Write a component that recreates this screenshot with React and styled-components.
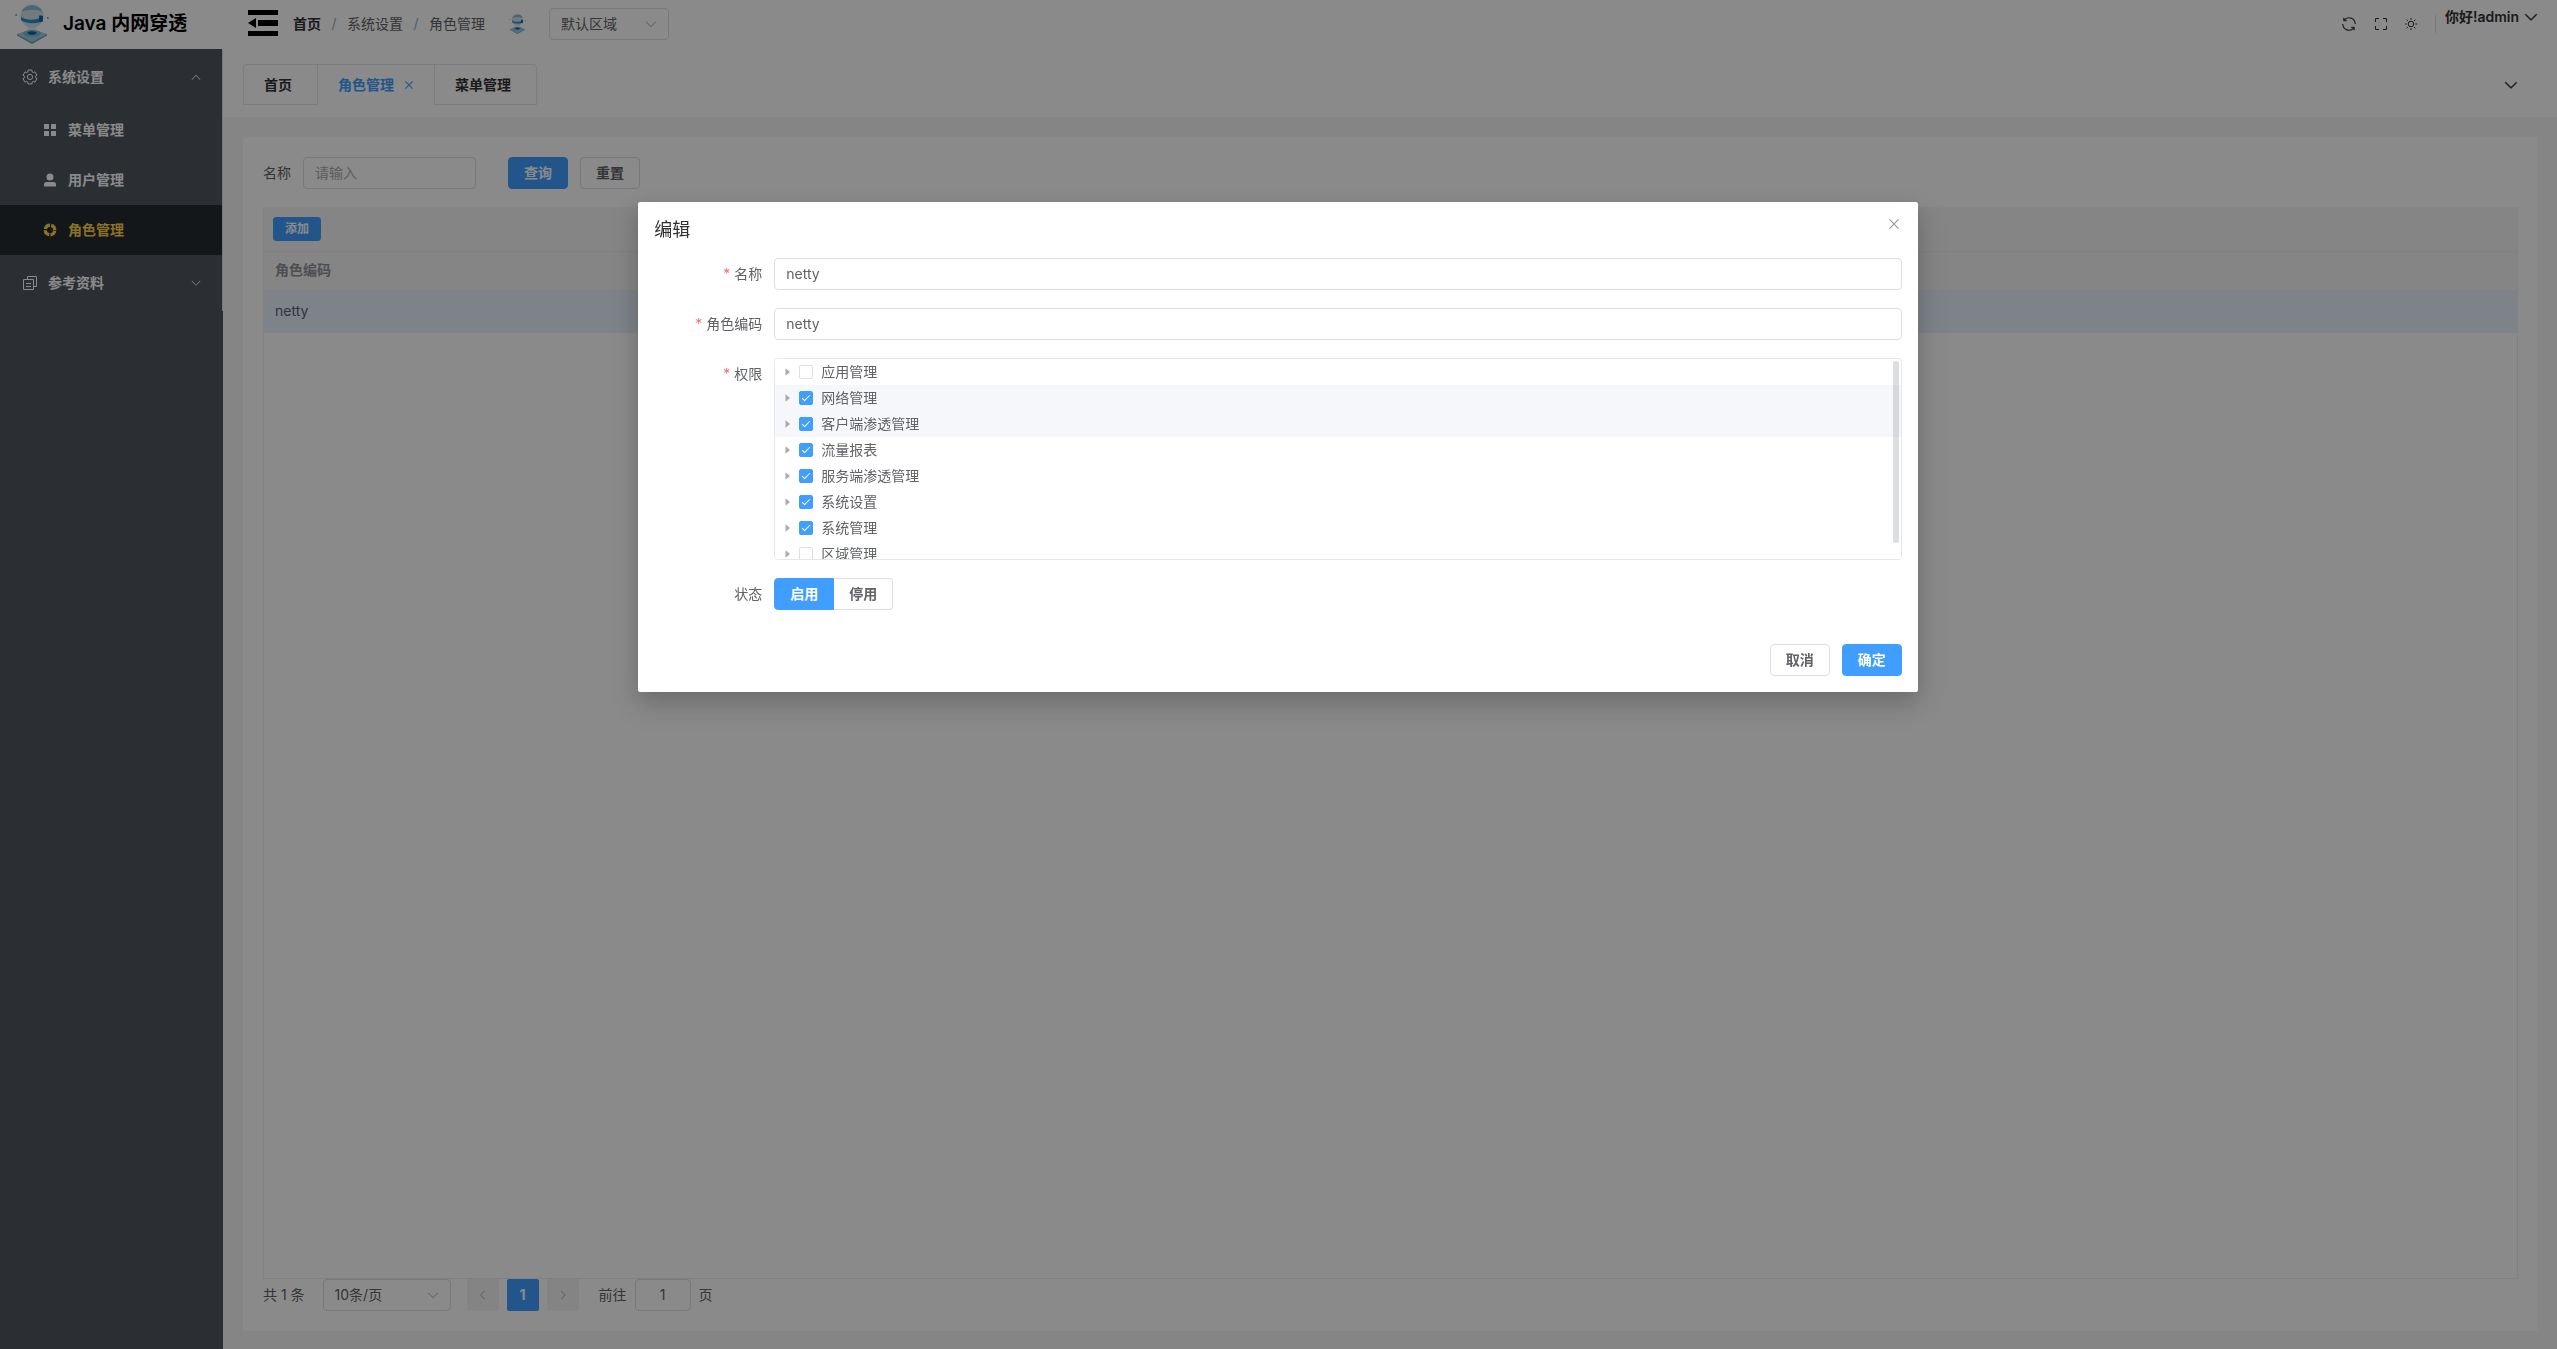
import React, { useState } from "react";
import styled, { createGlobalStyle, css } from "styled-components";

const Global = createGlobalStyle`
  *, *::before, *::after { box-sizing: border-box; }
  body {
    margin: 0;
    font-family: Inter, "Noto Sans CJK SC", sans-serif;
    font-size: 14px;
    line-height: 20px;
    color: #606266;
    background: #f5f5f5;
  }
  button, input, select {
    font: inherit;
    color: inherit;
    margin: 0;
  }
  button { cursor: pointer; }
`;

const BLUE = "#409eff";
const LINE = "#dcdfe6";

/* ---------- icons ---------- */

const Svg = styled.svg`
  display: block;
  flex: none;
  width: ${(p) => p.$size || 14}px;
  height: ${(p) => p.$size || 14}px;
`;

const ep = {
  down: "M831.872 340.864 512 652.672 192.128 340.864a30.592 30.592 0 0 0-42.752 0 29.12 29.12 0 0 0 0 41.6L489.664 714.24a32 32 0 0 0 44.672 0l340.288-331.712a29.12 29.12 0 0 0 0-41.728 30.592 30.592 0 0 0-42.752 0z",
  up: "m488.832 344.32-339.84 356.672a32 32 0 0 0 0 44.16l.384.384a29.44 29.44 0 0 0 42.688 0l320-335.872 319.872 335.872a29.44 29.44 0 0 0 42.688 0l.384-.384a32 32 0 0 0 0-44.16L535.168 344.32a32 32 0 0 0-46.336 0z",
  left: "M609.408 149.376 277.76 489.6a32 32 0 0 0 0 44.672l331.648 340.352a29.12 29.12 0 0 0 41.728 0 30.592 30.592 0 0 0 0-42.752L339.264 511.936l311.872-319.872a30.592 30.592 0 0 0 0-42.688 29.12 29.12 0 0 0-41.728 0z",
  right: "M340.864 149.312a30.592 30.592 0 0 0 0 42.752L652.736 512 340.864 831.872a30.592 30.592 0 0 0 0 42.752 29.12 29.12 0 0 0 41.728 0L714.24 534.336a32 32 0 0 0 0-44.672L382.592 149.376a29.12 29.12 0 0 0-41.728 0z",
  close: "M764.288 214.592 512 466.88 259.712 214.592a31.936 31.936 0 0 0-45.12 45.12L466.752 512 214.528 764.224a31.936 31.936 0 1 0 45.12 45.184L512 557.184l252.288 252.288a31.936 31.936 0 0 0 45.12-45.12L557.12 512.064l252.288-252.352a31.936 31.936 0 1 0-45.12-45.184z",
  caret: "M384 192v640l384-320.064z",
  menu: "M160 448a32 32 0 0 1-32-32V160.064a32 32 0 0 1 32-32h256a32 32 0 0 1 32 32V416a32 32 0 0 1-32 32zm448 0a32 32 0 0 1-32-32V160.064a32 32 0 0 1 32-32h255.936a32 32 0 0 1 32 32V416a32 32 0 0 1-32 32zM160 896a32 32 0 0 1-32-32V608a32 32 0 0 1 32-32h256a32 32 0 0 1 32 32v256a32 32 0 0 1-32 32zm448 0a32 32 0 0 1-32-32V608a32 32 0 0 1 32-32h255.936a32 32 0 0 1 32 32v256a32 32 0 0 1-32 32z",
  user: "M288 320a224 224 0 1 0 448 0 224 224 0 1 0-448 0m544 608H160a32 32 0 0 1-32-32v-96a160 160 0 0 1 160-160h448a160 160 0 0 1 160 160v96a32 32 0 0 1-32 32z",
  refresh: "M771.776 794.88A384 384 0 0 1 128 512h64a320 320 0 0 0 555.712 216.448H654.72a32 32 0 1 1 0-64h149.056a32 32 0 0 1 32 32v148.928a32 32 0 1 1-64 0v-50.56zM276.288 295.616h92.992a32 32 0 0 1 0 64H220.16a32 32 0 0 1-32-32V178.56a32 32 0 0 1 64 0v50.56A384 384 0 0 1 896.128 512h-64a320 320 0 0 0-555.776-216.384z",
};

function Icon({ name, size, heavy }) {
  return (
    <Svg
      viewBox="0 0 1024 1024"
      fill="currentColor"
      stroke={heavy ? "currentColor" : "none"}
      strokeWidth="36"
      $size={size}
      aria-hidden="true"
    >
      <path d={ep[name]} />
    </Svg>
  );
}

function GearIcon() {
  const pts = [];
  for (let i = 0; i < 6; i++) {
    const a = (i * 60 - 90) * (Math.PI / 180);
    const at = (r, d) =>
      `${(8 + r * Math.cos(a + d)).toFixed(2)} ${(8 + r * Math.sin(a + d)).toFixed(2)}`;
    pts.push(at(5.5, -0.4), at(7.2, -0.28), at(7.2, 0.28), at(5.5, 0.4));
  }
  return (
    <Svg viewBox="0 0 16 16" fill="none" stroke="currentColor" strokeLinejoin="round" $size={16} aria-hidden="true">
      <path d={`M${pts.join("L")}Z`} />
      <circle cx="8" cy="8" r="2.6" />
    </Svg>
  );
}

function CopyIcon() {
  return (
    <Svg viewBox="0 0 16 16" fill="none" stroke="currentColor" $size={16} aria-hidden="true">
      <path d="M1.5 4.5h10v10h-10zM5.5 4.5v-3h9v10h-3M4 8.5h5M4 11.5h5" />
    </Svg>
  );
}

function HelpIcon() {
  return (
    <Svg viewBox="0 0 16 16" fill="none" stroke="currentColor" $size={16} aria-hidden="true">
      <circle cx="8" cy="8" r="4.8" strokeWidth="3.2" strokeDasharray="6.3 1.24" strokeDashoffset="-0.62" />
    </Svg>
  );
}

function FullIcon() {
  return (
    <Svg viewBox="0 0 14 14" fill="none" stroke="currentColor" $size={14} aria-hidden="true">
      <path d="M1.5 5V1.5H5M9 1.5h3.500V5M12.500 9v3.500H9M5 12.500H1.500V9" />
    </Svg>
  );
}

function SunIcon() {
  return (
    <Svg viewBox="0 0 14 14" fill="none" stroke="currentColor" $size={14} aria-hidden="true">
      <circle cx="7" cy="7" r="2.8" />
      <path
        d="M7 1v1.600M7 11.400V13M1 7h1.600M11.400 7H13M2.600 2.600l1.200 1.200M10.200 10.200l1.200 1.200M2.600 11.400l1.200-1.200M10.200 3.800l1.200-1.200"
      />
    </Svg>
  );
}

function FoldIcon() {
  return (
    <svg width="30" height="26" viewBox="0 0 30 26" fill="#000" aria-hidden="true">
      <path d="M0 0h30v5H0zM10 10h20v6H10zM0 21h30v5H0zM0 13l8-5v10z" />
    </svg>
  );
}

const LogoSvg = styled.svg`
  display: block;
  flex: none;
  height: ${(p) => p.$h}px;
  width: auto;
`;

function Logo({ h }) {
  return (
    <LogoSvg viewBox="0 0 34 40" $h={h} aria-hidden="true">
      <path d="M2 30 17 25l15 5-15 8z" fill="#a9c9d8" />
      <path d="M2 30l15 8 15-8v1.500l-15 8.500-15-8.500z" fill="#5fa6c4" />
      <ellipse cx="17" cy="29.500" rx="9" ry="3.400" fill="#6fc0dc" />
      <ellipse cx="17" cy="29" rx="4.500" ry="1.800" fill="#155f9c" />
      <path d="M12 22h10l-2 4h-6z" fill="#dfe8ec" />
      <circle cx="17" cy="12" r="11.500" fill="#d5e0e5" />
      <path d="M6.500 8a11.500 11.500 0 0 1 21 0c-6-3-15-3-21 0z" fill="#7fc0d6" />
      <path d="M6 12.500c4 3.500 12 4 18 2v-3l4 .5c.5 5-1 6-4 6.500-6 1.500-15 .5-18-2.500z" fill="#1f97d0" />
      <rect x="24" y="11.500" width="4" height="6.500" rx="1.600" fill="#0e6cb0" />
      <circle cx="1.200" cy="11" r="1" fill="#3fb5df" />
      <circle cx="32.800" cy="14" r="1" fill="#3fb5df" />
    </LogoSvg>
  );
}

/* ---------- page frame ---------- */

const Page = styled.div`
  min-height: 100vh;
  display: flex;
  flex-direction: column;
`;

const Header = styled.header`
  height: 49px;
  flex: none;
  display: flex;
  background: #fff;
`;

const Brand = styled.div`
  width: 223px;
  flex: none;
  display: flex;
  align-items: center;
  gap: 14px;
  padding: 0 0 2px 15px;
  color: #000;
  font-size: 19px;
  font-weight: 600;
`;

const HeaderMain = styled.div`
  flex: 1;
  display: flex;
  align-items: center;
  padding: 0 18px 2px 25px;
`;

const BareButton = styled.button`
  display: flex;
  align-items: center;
  justify-content: center;
  padding: 0;
  border: 0;
  background: none;
`;

const FoldButton = styled(BareButton)`
  height: 26px;
  margin: 0 15px 2px 0;
`;

const Crumbs = styled.nav`
  display: flex;
  align-items: center;
  margin-right: 24px;
`;

const Crumb = styled.span`
  ${(p) => p.$root && css`
    font-weight: 700;
    color: #303133;
  `}
  &:not(:first-child)::before {
    content: "/";
    display: inline-block;
    width: 26px;
    text-align: center;
    font-weight: 400;
    color: #a8abb2;
  }
`;

const SelectBox = styled.div`
  position: relative;
  display: flex;
  width: ${(p) => p.$w}px;
  height: 32px;
  color: #606266;
  select {
    flex: 1;
    min-width: 0;
    appearance: none;
    padding: 0 30px 0 11px;
    border: 1px solid ${LINE};
    border-radius: 4px;
    background: #fff;
    outline: 0;
  }
  svg {
    position: absolute;
    right: 11px;
    top: 9px;
    color: #a8abb2;
    pointer-events: none;
  }
`;

const RegionSelect = styled(SelectBox)`
  margin-left: 23px;
`;

const Tools = styled.div`
  margin-left: auto;
  display: flex;
  align-items: center;
  color: #303133;
`;

const ToolGroup = styled.div`
  display: flex;
  align-items: center;
  gap: 16px;
  padding-right: 17px;
  border-right: 1px solid ${LINE};
`;

const UserButton = styled(BareButton)`
  gap: 4px;
  margin: 0 0 14px 9px;
  font-weight: 600;
  color: #303133;
`;

const Columns = styled.div`
  flex: 1;
  display: flex;
`;

const Sidebar = styled.aside`
  width: 223px;
  flex: none;
  background: #50575f;
`;

const Menu = styled.ul`
  margin: 0;
  padding: 0;
  list-style: none;
  color: #fff;
  border-right: 1px solid ${LINE};
`;

const SubMenu = styled.ul`
  margin: 0;
  padding: 0;
  list-style: none;
`;

const GroupButton = styled.button`
  display: flex;
  align-items: center;
  width: 100%;
  height: 56px;
  padding: 0 20px 0 22px;
  gap: 10px;
  border: 0;
  background: none;
  font-weight: 600;
  svg:last-child { margin-left: auto; }
`;

const ItemLink = styled.a`
  display: flex;
  align-items: center;
  height: 50px;
  gap: 10px;
  padding-left: 42px;
  font-weight: 600;
  text-decoration: none;
  color: ${(p) => (p.$active ? "#ffd04b" : "#fff")};
  background: ${(p) => (p.$active ? "#262c31" : "transparent")};
`;

const Content = styled.div`
  flex: 1;
  min-width: 0;
  display: flex;
  flex-direction: column;
`;

const TabBar = styled.div`
  display: flex;
  align-items: center;
  justify-content: space-between;
  height: 68px;
  padding: 3px 38px 0 20px;
  background: #fff;
  color: #303133;
`;

const Tabs = styled.div`
  display: flex;
  height: 41px;
  border: solid #e4e7ed;
  border-width: 1px 1px 0;
  border-radius: 4px 4px 0 0;
`;

const Tab = styled.div`
  display: flex;
  align-items: center;
  gap: 9px;
  padding: 0 ${(p) => (p.$active ? 19 : 25)}px 0 20px;
  border-bottom: 1px solid ${(p) => (p.$active ? "transparent" : "#e4e7ed")};
  color: ${(p) => (p.$active ? BLUE : "#303133")};
  &:not(:first-child) { border-left: 1px solid #e4e7ed; }
`;

const TabName = styled(BareButton)`
  font-weight: 600;
`;

const Card = styled.main`
  flex: 1;
  display: flex;
  flex-direction: column;
  margin: 20px 19px 18px 20px;
  padding: 20px;
  background: #fff;
`;

const SearchForm = styled.form`
  display: flex;
  align-items: center;
  margin-bottom: 18px;
`;

const SearchLabel = styled.label`
  padding-right: 12px;
`;

const TextInput = styled.input`
  width: ${(p) => (p.$w ? p.$w + "px" : "100%")};
  height: 32px;
  padding: 0 11px 1px;
  border: 1px solid ${LINE};
  border-radius: 4px;
  background: #fff;
  outline: 0;
  text-align: ${(p) => (p.$center ? "center" : "left")};
  &::placeholder { color: #a8abb2; opacity: 1; }
`;

const Button = styled.button`
  height: ${(p) => (p.$small ? 24 : 32)}px;
  padding: 0 ${(p) => (p.$small ? 11 : 15)}px;
  border: 1px solid ${(p) => (p.$primary ? BLUE : LINE)};
  border-radius: ${(p) => (p.$small ? 3 : 4)}px;
  background: ${(p) => (p.$primary ? BLUE : "#fff")};
  color: ${(p) => (p.$primary ? "#fff" : "#606266")};
  font-size: ${(p) => (p.$small ? 12 : 14)}px;
  font-weight: 600;
`;

const Buttons = styled.div`
  display: flex;
  gap: 12px;
  padding-left: 32px;
`;

const TablePanel = styled.section`
  flex: 1;
  display: flex;
  flex-direction: column;
  border: 1px solid #ebeef5;
  border-top: 0;
`;

const TableBar = styled.div`
  padding: 10px 9px;
  background: #f5f5f5;
`;

const Table = styled.table`
  width: 100%;
  border-collapse: collapse;
  text-align: left;
  th, td {
    padding: 0 11px 2px;
    border: solid #ebeef5;
    border-width: 1px 0;
  }
  th {
    height: 39px;
    background: #f5f5f5;
    color: #909399;
    font-weight: 700;
  }
  td {
    height: 42px;
    background: #e9f1fd;
  }
`;

const Pagination = styled.nav`
  display: flex;
  align-items: center;
  height: 32px;
  gap: 8px;
`;

const PagerItem = styled(BareButton)`
  width: 32px;
  height: 32px;
  border-radius: 2px;
  background: ${(p) => (p.$active ? BLUE : "#f4f4f5")};
  color: ${(p) => (p.$active ? "#fff" : "#a8abb2")};
  font-weight: 700;
`;

const PagerGroup = styled.div`
  display: flex;
  gap: 8px;
  padding: 0 12px 0 8px;
`;

const Total = styled.span`
  padding-right: 10px;
`;

/* ---------- dialog ---------- */

const Overlay = styled.div`
  position: fixed;
  inset: 0;
  background: rgba(0, 0, 0, 0.46);
`;

const Dialog = styled.div`
  position: relative;
  margin: 15vh 25% 0 calc(25% - 1px);
  padding: 16px;
  border-radius: 2px;
  background: #fff;
  box-shadow: 0 12px 32px 4px rgba(0, 0, 0, 0.14), 0 8px 20px rgba(0, 0, 0, 0.1);
`;

const DialogTitle = styled.h2`
  margin: 0 0 16px;
  font-size: 18px;
  line-height: 24px;
  font-weight: 400;
  color: #303133;
`;

const CloseButton = styled(BareButton)`
  position: absolute;
  top: 0;
  right: 0;
  width: 48px;
  height: 44px;
  color: #909399;
`;

const FormItem = styled.div`
  display: grid;
  grid-template-columns: 120px 1fr;
  margin-bottom: 18px;
`;

const FormLabel = styled.label`
  padding-right: 12px;
  line-height: 32px;
  text-align: right;
  ${(p) => p.$required && css`
    &::before {
      content: "*";
      margin-right: 4px;
      color: #f56c6c;
    }
  `}
`;

const TreeFrame = styled.div`
  position: relative;
  height: 202px;
  overflow: hidden;
  border: 1px solid #e4e7ed;
  border-radius: 4px;
`;

const TreeRow = styled.div`
  display: flex;
  align-items: center;
  height: 26px;
  background: ${(p) => (p.$lit ? "#f5f7fa" : "#fff")};
`;

const Caret = styled(BareButton)`
  width: 24px;
  height: 24px;
  color: #a8abb2;
`;

const CheckLabel = styled.label`
  display: flex;
  align-items: center;
  gap: 8px;
`;

const Check = styled.input`
  appearance: none;
  display: grid;
  place-items: center;
  width: 14px;
  height: 14px;
  margin: 0;
  border: 1px solid ${LINE};
  border-radius: 2px;
  background: #fff;
  &:checked {
    border-color: ${BLUE};
    background: ${BLUE};
  }
  &:checked::after {
    content: "";
    width: 4px;
    height: 8px;
    margin-bottom: 2px;
    border: solid #fff;
    border-width: 0 1px 1px 0;
    transform: rotate(45deg);
  }
`;

const Thumb = styled.div`
  position: absolute;
  top: 2px;
  right: 2px;
  width: 6px;
  height: 182px;
  border-radius: 4px;
  background: rgba(144, 147, 153, 0.3);
`;

const RadioGroup = styled.div`
  display: flex;
`;

const RadioOption = styled.label`
  position: relative;
  height: 32px;
  padding: 0 15px;
  border: 1px solid ${LINE};
  line-height: 30px;
  font-weight: 600;
  cursor: pointer;
  &:first-child { border-radius: 4px 0 0 4px; }
  &:last-child { border-radius: 0 4px 4px 0; border-left: 0; }
  &:has(input:checked) {
    border-color: ${BLUE};
    background: ${BLUE};
    color: #fff;
  }
  input {
    position: absolute;
    inset: 0;
    margin: 0;
    opacity: 0;
  }
`;

const DialogFooter = styled.div`
  display: flex;
  justify-content: flex-end;
  gap: 12px;
  padding-top: 16px;
`;

const permissions = [
  { name: "应用管理", checked: false },
  { name: "网络管理", checked: true, lit: true },
  { name: "客户端渗透管理", checked: true, lit: true },
  { name: "流量报表", checked: true },
  { name: "服务端渗透管理", checked: true },
  { name: "系统设置", checked: true },
  { name: "系统管理", checked: true },
  { name: "区域管理", checked: false },
];

function EditDialog() {
  const [status, setStatus] = useState("启用");
  return (
    <Overlay>
      <Dialog role="dialog" aria-modal="true" aria-labelledby="dialog-title">
        <DialogTitle id="dialog-title">编辑</DialogTitle>
        <CloseButton type="button" aria-label="关闭">
          <Icon name="close" size={16} />
        </CloseButton>
        <FormItem>
          <FormLabel $required htmlFor="role-name">名称</FormLabel>
          <TextInput id="role-name" defaultValue="netty" />
        </FormItem>
        <FormItem>
          <FormLabel $required htmlFor="role-code">角色编码</FormLabel>
          <TextInput id="role-code" defaultValue="netty" />
        </FormItem>
        <FormItem>
          <FormLabel as="span" $required id="perm-label">权限</FormLabel>
          <TreeFrame role="group" aria-labelledby="perm-label">
            {permissions.map((p) => (
              <TreeRow key={p.name} $lit={p.lit}>
                <Caret type="button" aria-label="展开">
                  <Icon name="caret" size={12} />
                </Caret>
                <CheckLabel>
                  <Check type="checkbox" defaultChecked={p.checked} />
                  {p.name}
                </CheckLabel>
              </TreeRow>
            ))}
            <Thumb />
          </TreeFrame>
        </FormItem>
        <FormItem>
          <FormLabel as="span" id="status-label">状态</FormLabel>
          <RadioGroup role="radiogroup" aria-labelledby="status-label">
            {["启用", "停用"].map((s) => (
              <RadioOption key={s}>
                <input type="radio" name="status" checked={status === s} onChange={() => setStatus(s)} />
                {s}
              </RadioOption>
            ))}
          </RadioGroup>
        </FormItem>
        <DialogFooter>
          <Button type="button">取消</Button>
          <Button type="button" $primary>确定</Button>
        </DialogFooter>
      </Dialog>
    </Overlay>
  );
}

export default function App() {
  return (
    <>
      <Global />
      <Page>
        <Header>
          <Brand>
            <Logo h={40} />
            Java 内网穿透
          </Brand>
          <HeaderMain>
            <FoldButton type="button" aria-label="折叠菜单"><FoldIcon /></FoldButton>
            <Crumbs>
              <Crumb $root>首页</Crumb>
              <Crumb>系统设置</Crumb>
              <Crumb>角色管理</Crumb>
            </Crumbs>
            <Logo h={20} />
            <RegionSelect $w={120}>
              <select aria-label="区域" defaultValue="默认区域"><option>默认区域</option></select>
              <Icon name="down" size={14} />
            </RegionSelect>
            <Tools>
              <ToolGroup>
                <BareButton type="button" aria-label="刷新"><Icon name="refresh" size={18} /></BareButton>
                <BareButton type="button" aria-label="全屏"><FullIcon /></BareButton>
                <BareButton type="button" aria-label="主题"><SunIcon /></BareButton>
              </ToolGroup>
              <UserButton type="button">
                你好!admin
                <Icon name="down" size={16} heavy />
              </UserButton>
            </Tools>
          </HeaderMain>
        </Header>
        <Columns>
          <Sidebar>
            <Menu>
              <li>
                <GroupButton type="button">
                  <GearIcon />系统设置<Icon name="up" size={12} />
                </GroupButton>
                <SubMenu>
                  <li><ItemLink href="#menu"><Icon name="menu" size={16} />菜单管理</ItemLink></li>
                  <li><ItemLink href="#user"><Icon name="user" size={16} />用户管理</ItemLink></li>
                  <li><ItemLink href="#role" $active><HelpIcon />角色管理</ItemLink></li>
                </SubMenu>
              </li>
              <li>
                <GroupButton type="button">
                  <CopyIcon />参考资料<Icon name="down" size={12} />
                </GroupButton>
              </li>
            </Menu>
          </Sidebar>
          <Content>
            <TabBar>
              <Tabs>
                <Tab><TabName type="button">首页</TabName></Tab>
                <Tab $active>
                  <TabName type="button">角色管理</TabName>
                  <BareButton type="button" aria-label="关闭标签"><Icon name="close" size={12} heavy /></BareButton>
                </Tab>
                <Tab><TabName type="button">菜单管理</TabName></Tab>
              </Tabs>
              <BareButton type="button" aria-label="更多"><Icon name="down" size={16} heavy /></BareButton>
            </TabBar>
            <Card>
              <SearchForm onSubmit={(e) => e.preventDefault()}>
                <SearchLabel htmlFor="q">名称</SearchLabel>
                <TextInput id="q" $w={173} placeholder="请输入" />
                <Buttons>
                  <Button type="submit" $primary>查询</Button>
                  <Button type="reset">重置</Button>
                </Buttons>
              </SearchForm>
              <TablePanel>
                <TableBar><Button type="button" $primary $small>添加</Button></TableBar>
                <Table>
                  <thead><tr><th scope="col">角色编码</th></tr></thead>
                  <tbody><tr><td>netty</td></tr></tbody>
                </Table>
              </TablePanel>
              <Pagination aria-label="分页">
                <Total>共 1 条</Total>
                <SelectBox $w={128}>
                  <select aria-label="每页条数" defaultValue="10条/页"><option>10条/页</option></select>
                  <Icon name="down" size={14} />
                </SelectBox>
                <PagerGroup>
                  <PagerItem type="button" aria-label="上一页"><Icon name="left" size={12} /></PagerItem>
                  <PagerItem type="button" $active>1</PagerItem>
                  <PagerItem type="button" aria-label="下一页"><Icon name="right" size={12} /></PagerItem>
                </PagerGroup>
                <label htmlFor="goto">前往</label>
                <TextInput id="goto" $w={56} $center defaultValue="1" />
                <span>页</span>
              </Pagination>
            </Card>
          </Content>
        </Columns>
      </Page>
      <EditDialog />
    </>
  );
}
